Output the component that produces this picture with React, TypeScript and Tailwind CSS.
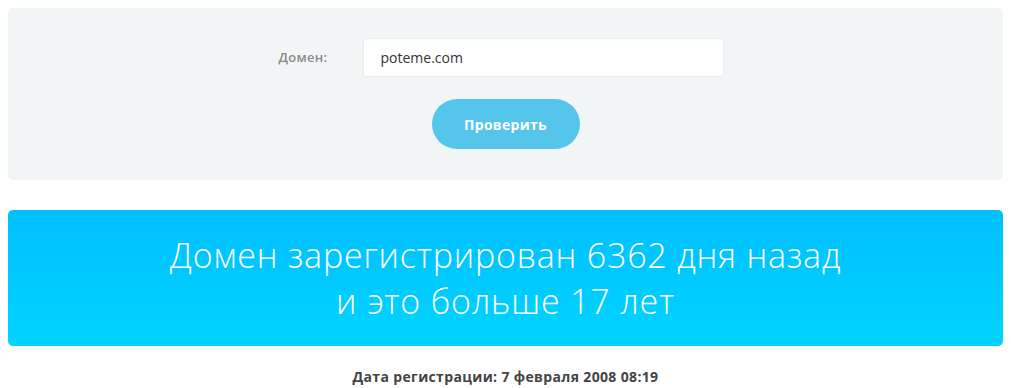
export default function App() {
  return (
    <div className="min-h-[388px] bg-white px-2 pt-2" style={{ fontFamily: '"Open Sans", "Liberation Sans", sans-serif' }}>
      <div className="flex h-[172px] flex-col items-center rounded-[5px] bg-[#f2f5f6] pt-[30px]">
        <div className="flex items-center pr-[9px]">
          <label className="w-[84px] text-[13px] font-semibold tracking-[0.3px] text-[#8a8a8a]">Домен:</label>
          <div className="flex h-[39px] w-[361px] items-center rounded-[3px] border border-[#e9eced] bg-white px-[17px] text-[14px] text-[#333]">
            poteme.com
          </div>
        </div>
        <button
          type="button"
          className="mt-[22px] h-[50px] w-[148px] rounded-full bg-[#55c5ec] text-[14px] font-bold tracking-[0.3px] text-white"
        >
          Проверить
        </button>
      </div>

      <div className="mt-[30px] flex h-[136px] flex-col items-center justify-center rounded-[5px] bg-gradient-to-b from-[#00bfff] to-[#00d4ff] text-[34px] font-light leading-[46px] tracking-[0.8px] text-white">
        <p>Домен зарегистрирован 6362 дня назад</p>
        <p>и это больше 17 лет</p>
      </div>

      <p className="mt-[20px] text-center text-[14px] font-bold tracking-[0.35px] text-[#444]">
        Дата регистрации: 7 февраля 2008 08:19
      </p>
    </div>
  );
}
